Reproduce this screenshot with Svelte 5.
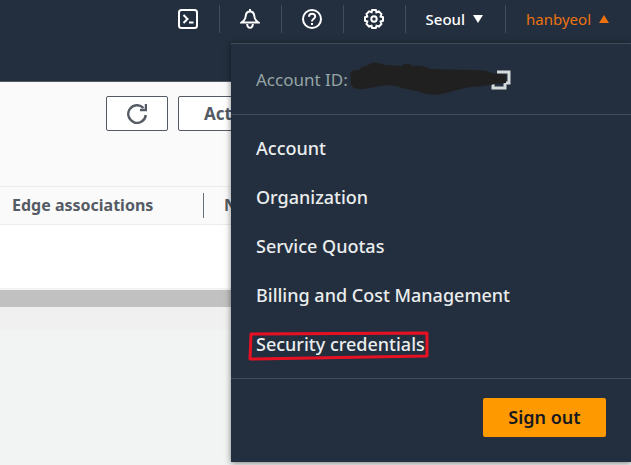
<script>
    let menuOpen = true;
    const links = ["Account", "Organization", "Service Quotas", "Billing and Cost Management", "Security credentials"];
    const highlighted = "Security credentials";

    function toggleMenu(){
        menuOpen = !menuOpen;
    }
</script>

<div class="console">
    <header>
        <nav class="top-nav">
            <button class="nav-item icon" aria-label="CloudShell">
                <svg width="20" height="20" viewBox="0 0 20 20">
                    <rect x="1" y="1" width="18" height="18" rx="2.5" />
                    <path d="M5.5 6 L9.5 10 L5.5 14 M11 13.6 H15.5" />
                </svg>
            </button>
            <button class="nav-item icon" aria-label="Notifications">
                <svg width="20" height="20" viewBox="0 0 20 20">
                    <path d="M10 0 V3 M1.5 13.6 C4.5 11.5 5.5 10 5.7 7 C6 4 7.5 2.6 10 2.6 C12.5 2.6 14 4 14.3 7 C14.5 10 15.5 11.5 18.5 13.6 Z M7.2 15 C7 20 13 20 12.8 15" />
                </svg>
            </button>
            <button class="nav-item icon" aria-label="Support">
                <svg width="20" height="20" viewBox="0 0 20 20">
                    <circle cx="10" cy="10" r="9" />
                    <path d="M7 7.8 C7 3.6 13.2 3.8 13.2 7.4 C13.2 9.8 10 9.6 10 12.4 M10 14 V16" />
                </svg>
            </button>
            <button class="nav-item icon" aria-label="Settings">
                <svg width="20" height="20" viewBox="0 0 20 20">
                    <path d="M8.2 1 H11.8 L12.4 3.3 L14.8 2.4 L17.4 5 L16.6 7.5 L19 8.2 V11.8 L16.6 12.5 L17.4 15 L15 17.5 L12.5 16.7 L11.8 19 H8.2 L7.5 16.7 L5 17.5 L2.5 15 L3.3 12.5 L1 11.8 V8.2 L3.3 7.5 L2.5 5 L5.1 2.4 L7.6 3.3 Z" />
                    <circle cx="10" cy="10" r="2.7" />
                </svg>
            </button>
            <button class="nav-item region">Seoul
                <svg class="caret" width="10" height="8" viewBox="0 0 10 8"><path d="M0 0 H10 L5 8 Z" /></svg>
            </button>
            <button class="nav-item user" aria-expanded={menuOpen} on:click={toggleMenu}>hanbyeol
                <svg class="caret" width="10" height="8" viewBox="0 0 10 8"><path d="M0 8 H10 L5 0 Z" /></svg>
            </button>
        </nav>

        {#if menuOpen}
        <div class="menu">
            <div class="account-id">
                <span>Account ID:</span>
                <svg class="masked" width="166" height="36" viewBox="0 0 166 36">
                    <path class="copy" d="M149 11 H161 V22 H158 M145 23 V27 H157 V22" />
                    <path class="mask" d="M2 13 C3 9 7 9 11 9 C14 4 20 6 23 2 C29 0 34 4 39 4 L53 5 C57 1 62 3 65 5 C73 4 79 6 82 8 L124 9 C132 9 139 9 143 12 L158 14 V22 L147 23 C136 26 125 25 117 27 L98 32 C88 35 80 34 72 31 L54 27 C45 23 35 24 28 26 L15 28 C6 29 1 25 3 19 Z" />
                </svg>
            </div>
            <ul>
                {#each links as link}
                <li><a href="#top">{link}
                    {#if link === highlighted}
                    <svg class="marker" width="182" height="32" viewBox="0 0 182 32"><path d="M3 4 L179 3 V26 L2 29 Z" /></svg>
                    {/if}
                </a></li>
                {/each}
            </ul>
            <div class="menu-footer">
                <button class="sign-out">Sign out</button>
            </div>
        </div>
        {/if}
    </header>

    <main>
        <div class="toolbar">
            <button class="action refresh" aria-label="Refresh">
                <svg width="20" height="20" viewBox="0 0 20 20">
                    <path d="M18.8 11 A8.8 8.8 0 1 1 16.5 4" />
                    <path class="arrow" d="M19 0 V6 H13" />
                </svg>
            </button>
            <button class="action">Actions</button>
        </div>
        <table>
            <thead>
                <tr><th>Edge associations</th><th>N</th></tr>
            </thead>
            <tbody>
                <tr><td></td><td></td></tr>
            </tbody>
        </table>
        <div class="scroll-track"><div class="scroll-thumb"></div></div>
    </main>
</div>

<style>
    :global(body){
        margin: 0;
        background-color: #f2f4f4;
    }
    .console{
        position: relative;
        min-height: 100vh;
        overflow: hidden;
        font-family: "Noto Sans", sans-serif;
        background-color: #f2f4f4;
    }
    button{
        font-family: inherit;
        cursor: pointer;
    }
    header{
        height: 81px;
        background-color: #232f3e;
        border-bottom: 1px solid #545b64;
    }
    .top-nav{
        display: flex;
        justify-content: flex-end;
        padding-top: 5px;
    }
    .nav-item{
        display: flex;
        align-items: center;
        justify-content: center;
        height: 28px;
        padding: 0 22px 0 20px;
        border: 0;
        border-left: 1px solid #414d5c;
        background: none;
        color: white;
        font-size: 15px;
        font-weight: 500;
        white-space: nowrap;
    }
    .nav-item.icon{
        width: 62px;
        padding: 0;
    }
    .nav-item:first-child{
        border-left: 0;
    }
    .nav-item.user{
        color: #ec7211;
        font-weight: 400;
    }
    .nav-item svg{
        fill: none;
        stroke: white;
        stroke-width: 2;
    }
    .nav-item .caret{
        margin-left: 8px;
        fill: currentColor;
        stroke: none;
    }
    .menu{
        position: absolute;
        top: 43px;
        right: 0;
        z-index: 2;
        width: 400px;
        border-top: 1px solid #414d5c;
        background-color: #232f3e;
        box-shadow: 0 1px 6px rgba(0, 0, 0, 0.5);
        color: #eaeded;
        font-size: 18px;
    }
    .account-id{
        display: flex;
        align-items: center;
        height: 70px;
        padding-left: 25px;
        border-bottom: 1px solid #414d5c;
        color: #95a5a6;
        font-size: 17px;
    }
    .masked{
        fill: none;
    }
    .copy{
        stroke: #d5dbdb;
        stroke-width: 3;
    }
    .mask{
        fill: #202020;
    }
    ul{
        margin: 0;
        padding: 8px 25px 10px;
        list-style: none;
    }
    li{
        display: flex;
        align-items: center;
        height: 49px;
    }
    a{
        position: relative;
        color: inherit;
        font-weight: 500;
        text-decoration: none;
    }
    .marker{
        position: absolute;
        top: -2px;
        left: -8px;
        fill: none;
        stroke: #e81123;
        stroke-width: 3;
        stroke-linejoin: round;
    }
    .menu-footer{
        display: flex;
        justify-content: flex-end;
        padding: 19px 25px 25px;
        border-top: 1px solid #414d5c;
    }
    .sign-out{
        width: 123px;
        height: 39px;
        padding: 0 0 2px;
        border: 0;
        border-radius: 2px;
        background-color: #ff9900;
        color: #16191f;
        font-size: 18px;
        font-weight: 600;
    }
    .toolbar{
        display: flex;
        gap: 10px;
        height: 90px;
        padding: 14px 0 0 106px;
        background-color: #fafafa;
    }
    .action{
        height: 35px;
        padding: 0 25px;
        border: 1px solid #545b64;
        border-radius: 2px;
        background-color: white;
        color: #545b64;
        font-size: 17px;
        font-weight: 700;
    }
    .refresh{
        display: flex;
        align-items: center;
        justify-content: center;
        width: 62px;
        padding: 0;
    }
    .refresh svg{
        fill: none;
        stroke: #545b64;
        stroke-width: 2.4;
    }
    .refresh .arrow{
        stroke-width: 2.4;
    }
    table{
        width: 100%;
        border-collapse: collapse;
        background-color: white;
    }
    thead tr{
        height: 38px;
        background: #fafafa;
        border-top: 1px solid #eaeded;
        border-bottom: 1px solid #eaeded;
    }
    th{
        padding: 0;
        color: #545b64;
        font-size: 16px;
        font-weight: 700;
        line-height: 25px;
        text-align: left;
        text-indent: 20px;
    }
    th:first-child{
        width: 204px;
        text-indent: 12px;
        background: linear-gradient(#687078, #687078) right center / 1px 25px no-repeat;
    }
    td{
        height: 63px;
        padding: 0;
        border-bottom: 2px solid #f2f3f3;
    }
    .scroll-track{
        height: 40px;
        background-color: #f0f0f0;
    }
    .scroll-thumb{
        height: 17px;
        background-color: #c1c1c1;
    }
</style>
